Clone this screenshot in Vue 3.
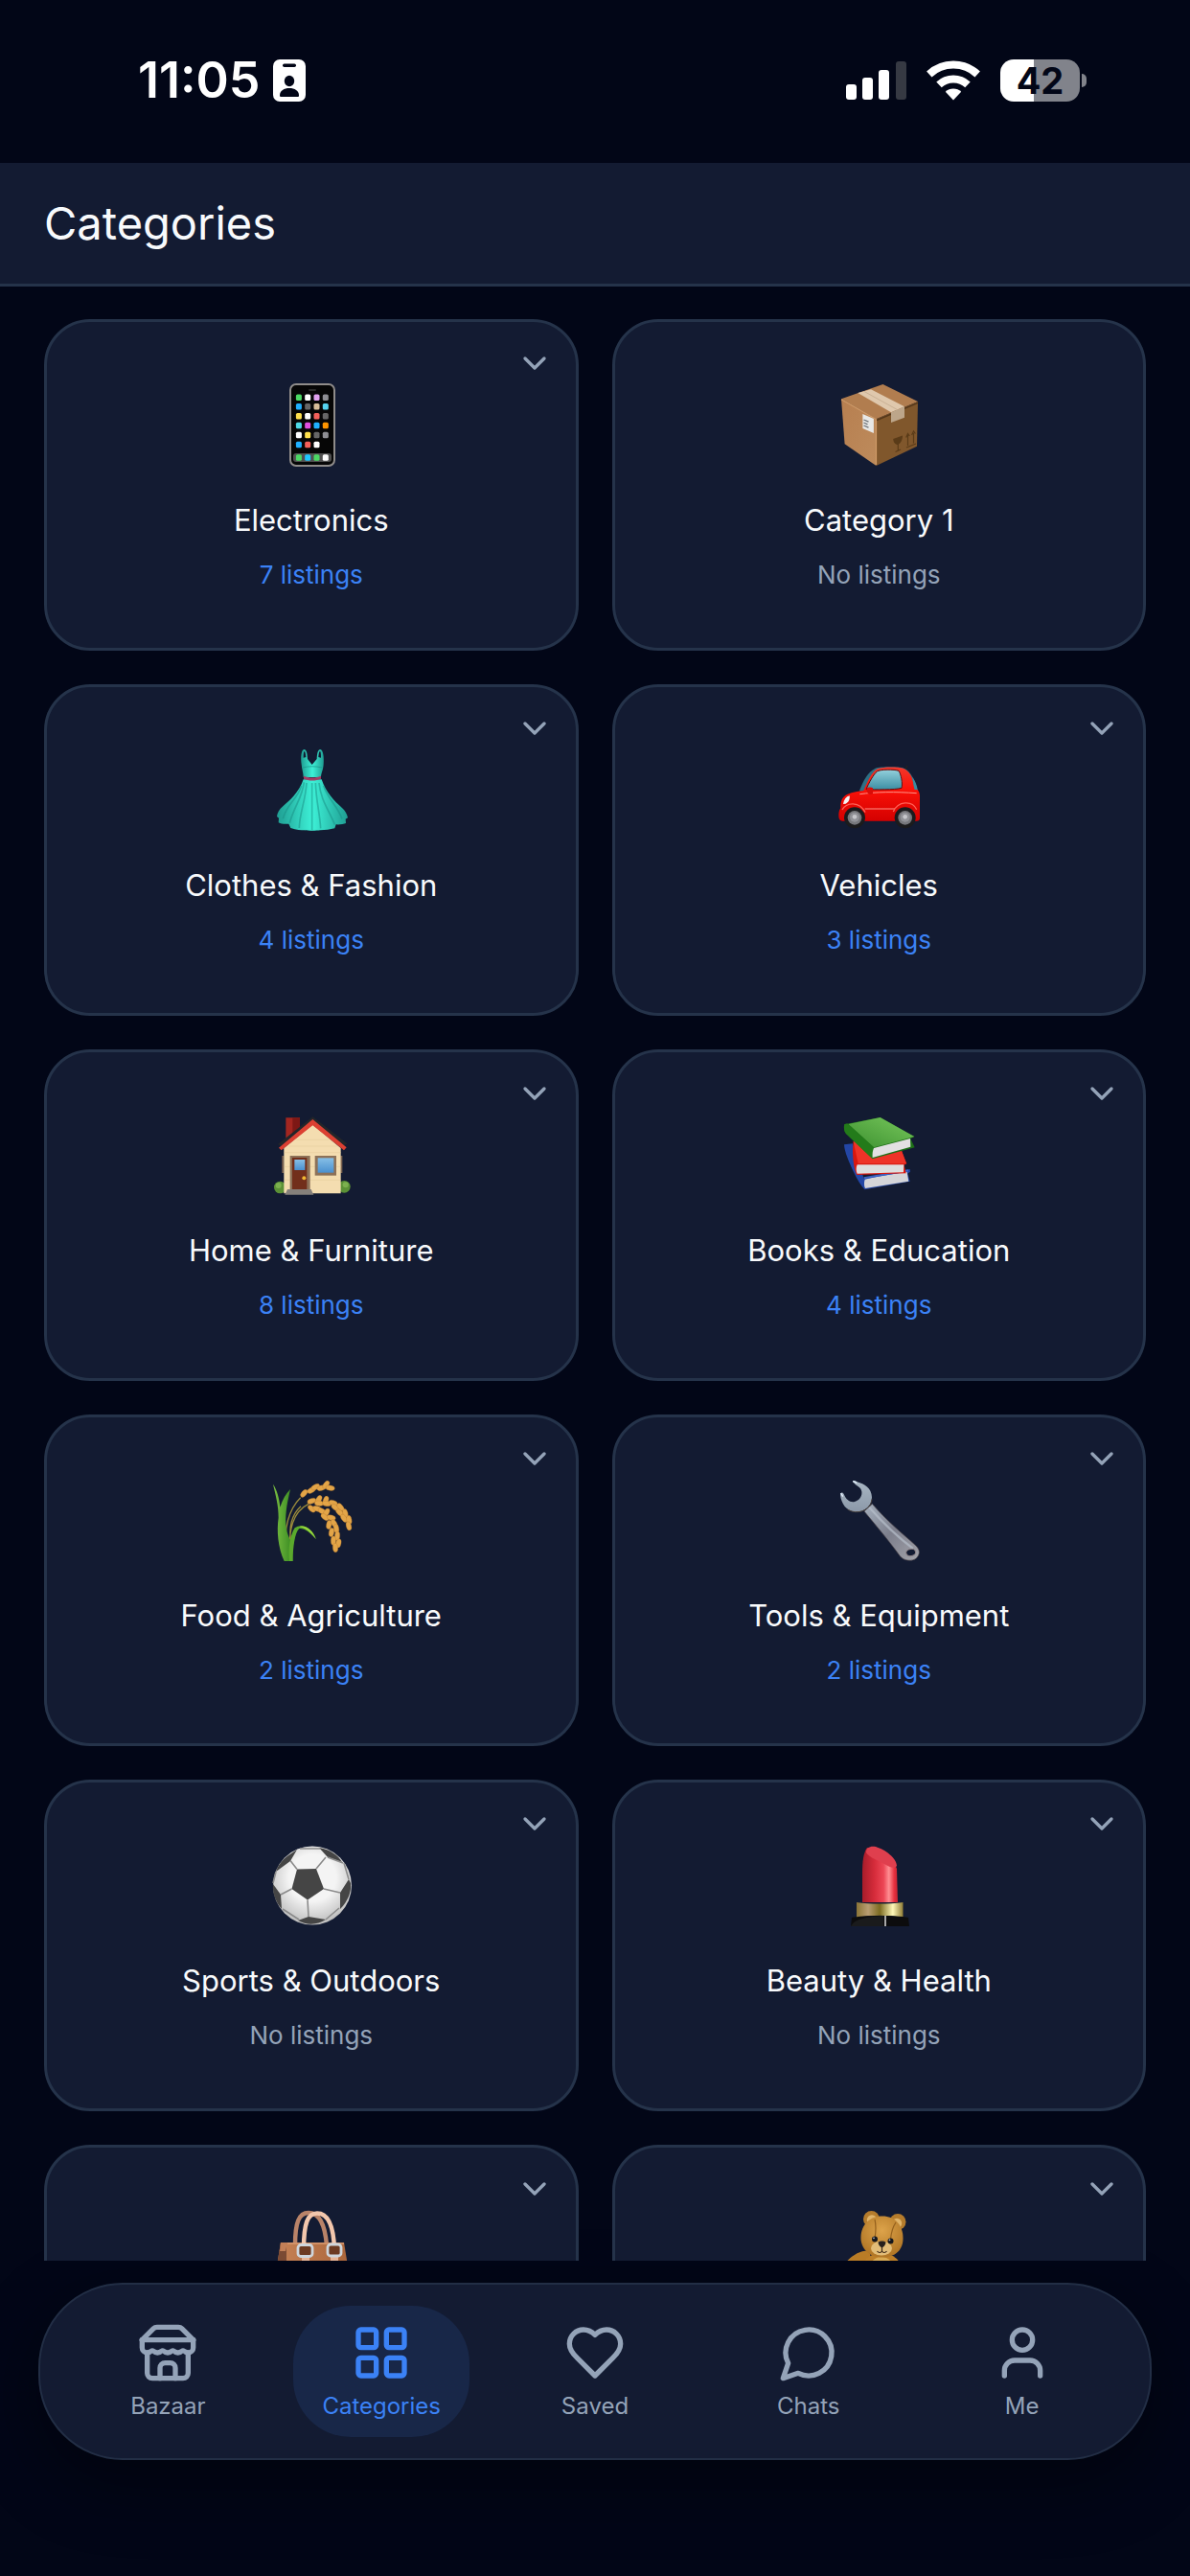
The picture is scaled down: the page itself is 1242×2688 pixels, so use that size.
<template>
  <div class="app">
    <!-- Shared drawings, referenced by id -->
    <svg class="sprite" aria-hidden="true">
      <defs>
        <linearGradient id="g-dress" x1="0" x2="1" y1="0" y2="0">
          <stop offset="0" stop-color="#1f9d92" />
          <stop offset="0.5" stop-color="#3df0d6" />
          <stop offset="1" stop-color="#1f9d92" />
        </linearGradient>
        <linearGradient id="g-glass" x1="0" x2="0" y1="0" y2="1">
          <stop offset="0" stop-color="#93d0dc" />
          <stop offset="1" stop-color="#3c8ea3" />
        </linearGradient>
        <linearGradient id="g-car" x1="0" x2="0" y1="0" y2="1">
          <stop offset="0" stop-color="#f2382c" />
          <stop offset="0.4" stop-color="#fb1208" />
          <stop offset="1" stop-color="#d40000" />
        </linearGradient>
        <linearGradient id="g-window" x1="0" x2="0" y1="0" y2="1">
          <stop offset="0" stop-color="#86bfe6" />
          <stop offset="1" stop-color="#4a90cf" />
        </linearGradient>
        <linearGradient id="g-green" x1="0" x2="1" y1="1" y2="0">
          <stop offset="0" stop-color="#3c9130" />
          <stop offset="1" stop-color="#78c75c" />
        </linearGradient>
        <linearGradient id="g-leaf" x1="0" x2="1" y1="0" y2="0">
          <stop offset="0" stop-color="#7cc142" />
          <stop offset="1" stop-color="#388a22" />
        </linearGradient>
        <linearGradient id="g-steel" x1="0" x2="0" y1="0" y2="1">
          <stop offset="0" stop-color="#a9b7c4" />
          <stop offset="1" stop-color="#8b98a8" />
        </linearGradient>
        <linearGradient id="g-handle" x1="0" x2="1" y1="0" y2="1">
          <stop offset="0" stop-color="#a5b0be" />
          <stop offset="0.5" stop-color="#7d7f8c" />
          <stop offset="1" stop-color="#a3a3aa" />
        </linearGradient>
        <radialGradient id="g-ball" cx="0.5" cy="0.4" r="0.6">
          <stop offset="0.5" stop-color="#f4f4f4" />
          <stop offset="1" stop-color="#bdbdbd" />
        </radialGradient>
        <linearGradient id="g-lip" x1="0" x2="1" y1="0" y2="0">
          <stop offset="0" stop-color="#a81c2a" />
          <stop offset="0.35" stop-color="#d62c3b" />
          <stop offset="0.6" stop-color="#ec4655" />
          <stop offset="0.75" stop-color="#ff8f93" />
          <stop offset="0.9" stop-color="#e8303f" />
          <stop offset="1" stop-color="#c42332" />
        </linearGradient>
        <linearGradient id="g-gold" x1="0" x2="1" y1="0" y2="0">
          <stop offset="0" stop-color="#8a7436" />
          <stop offset="0.25" stop-color="#b99d72" />
          <stop offset="0.5" stop-color="#7c6b20" />
          <stop offset="0.78" stop-color="#fff8b8" />
          <stop offset="1" stop-color="#8f7c35" />
        </linearGradient>
        <radialGradient id="g-bear" cx="0.5" cy="0.35" r="0.7">
          <stop offset="0" stop-color="#dda34a" />
          <stop offset="1" stop-color="#ad7222" />
        </radialGradient>
        <linearGradient id="g-bag" x1="0" x2="1" y1="0" y2="0">
          <stop offset="0" stop-color="#c88457" />
          <stop offset="1" stop-color="#a9643a" />
        </linearGradient>
        <linearGradient id="g-box" x1="0" x2="1" y1="0" y2="1">
          <stop offset="0" stop-color="#b77f50" />
          <stop offset="1" stop-color="#bd8b5c" />
        </linearGradient>
      </defs>

      <symbol id="phone" viewBox="0 0 90 90">
        <rect x="23" y="3" width="46" height="85" rx="6" fill="#060606" stroke="#8f8c8a" stroke-width="2" />
        <rect x="42" y="8" width="8" height="2" rx="1" fill="#2a2a2a" />
        <rect x="26" y="75" width="40" height="9" rx="3" fill="#505050" />
        <rect
          v-for="dot in phoneDots"
          :key="dot.x + '-' + dot.y"
          :x="dot.x"
          :y="dot.y"
          width="6"
          height="6.6"
          rx="1.6"
          :fill="dot.color"
        />
      </symbol>

      <symbol id="box" viewBox="0 0 90 90">
        <path d="M49.5 3 86 21 42.5 39.3 6 18.3Z" fill="#b17d4f" />
        <path d="M6 18.3 42.5 39.3V88L9.6 65.3Z" fill="url(#g-box)" />
        <path d="M86 21 42.5 39.3V88L85 67.7Z" fill="#80572c" />
        <path d="M6 18.8 42.5 39.6V87" fill="none" stroke="#cf9a68" stroke-width="1.2" />
        <path d="M43 40.5 86 22.4" stroke="#54371a" stroke-width="1.4" />
        <path d="M23.3 12 37 8.3 72 26.3 58 32.3Z" fill="#dfc8ad" />
        <path d="M58 32.3 72 26.3V37.7L58 43Z" fill="#bda68a" />
        <path d="m30 10.5 34.5 19" stroke="#c9b195" />
        <path d="M28.4 34 39.9 39V54L28.4 49Z" fill="#e8e8e6" />
        <path d="m29.5 40 5 2.2M29.5 43l4 1.8M29.5 46l5 2.2" stroke="#6f7479" stroke-width="1.3" />
        <path d="M60.2 60 70 56.5C70 61 68 64.5 65.3 66 62 66 60.5 63.5 60.2 60Z" fill="#5a3b18" />
        <path d="M65.3 65v7M62.5 73.5 68 71M75.5 67V56M81.5 64.5V54M73.7 58.5l1.8-4 1.8 2.500M79.600 56l1.900-4 1.900 2.500M74 69l10-4" fill="none" stroke="#5a3b18" stroke-width="1.2" />
      </symbol>

      <symbol id="dress" viewBox="120 86 270 270">
        <path d="M224 142C221 120 223 96 232 95c9 0 10 16 11 30l14 18 15-18c1-14 2-30 11-30 9 1 12 25 10 47-1 18-8 26-8 40l-55 0c0-14-5-26-6-40Z" fill="url(#g-dress)" />
        <path d="M230 121c0-12 1-20 3-20 3 0 4 10 5 18ZM285 121c0-12-1-20-3-20-3 0-4 10-5 18Z" fill="#131b32" />
        <path d="M230 189c-14 41-45 68-64 84-12 10-18 21-19 32l6 5-1 14c8 5 22 5 32 4l6 13c18 7 33 7 44 7 10 2 38 2 48 0 17 0 31-2 46-6l4-12c10 1 25-1 31-4l-1-13 7-4c-3-13-8-22-18-31-25-22-50-47-64-89Z" fill="url(#g-dress)" />
        <path d="M232 198c-6 50-30 72-45 127M240 200c-4 60-22 92-23 141M279 200c6 55 28 80 49 130M268 200c2 60 13 90 16 142M224 208c-14 46-47 58-58 104M293 208c14 42 42 62 58 104M257 200v147" fill="none" stroke="#178e83" stroke-width="5" opacity="0.5" />
        <path d="M228 152c18-5 40-5 60 0" fill="none" stroke="#1a9489" stroke-width="3" opacity="0.7" />
        <path d="M231 178c15 7 39 7 54 0v9c-16 7-39 7-54 0Z" fill="#a43c64" />
      </symbol>

      <symbol id="car" viewBox="126 86 270 270">
        <path d="m344 158 7-13" stroke="#222" stroke-width="4" />
        <path d="M201 224c12-32 26-58 50-70 15-5 72-6 89 0 22 10 36 38 43 70l-10 12H212Z" fill="#2e6f84" />
        <path d="M214 224c12-26 24-58 44-68 20-7 60-7 82-1 18 8 27 28 31 50 3 12 18 14 19 34v71c0 6-4 9-10 9H148c-8 0-12-6-12-16 0-10 1-17 6-24-1-20 4-36 22-44 16-6 35-9 50-11Z" fill="url(#g-car)" />
        <path d="M222 220c8-20 24-48 34-56 9-7 55-7 68-2 7 10 13 40 9 54-20 6-85 5-111 4Z" fill="url(#g-glass)" stroke="#5b0f10" stroke-width="3" />
        <path d="M366 182c8 8 15 24 17 40l-10-2Z" fill="#3b8a9f" />
        <path d="M202 235c50-7 110-8 178-3M218 281h94" fill="none" stroke="#ff9489" stroke-width="3" />
        <path d="M150 266c2-14 9-23 20-26 2 12-4 21-12 25Z" fill="#f5f5f5" />
        <path d="M224 215c8-3 15-2 19 1v18c-10 4-15 0-18-5Z" fill="#d90d08" />
        <path d="M147 284c13-24 54-28 72 8M307 290c15-34 59-36 73-7" fill="none" stroke="#ff6257" stroke-width="4" />
        <g v-for="cx in [186, 344]" :key="cx">
          <circle :cx="cx" cy="309" r="33" fill="#1b1b1d" />
          <circle :cx="cx" cy="309" r="22" fill="#77787c" />
          <circle :cx="cx" cy="307" r="15" fill="#929398" />
          <circle :cx="cx" cy="306" r="7" fill="#c6c7cb" />
        </g>
      </symbol>

      <symbol id="house" viewBox="120 58 270 270">
        <circle cx="157" cy="295" r="19" fill="#5b9136" />
        <circle cx="358" cy="293" r="19" fill="#5b9136" />
        <circle cx="152" cy="289" r="9" fill="#7bb04e" />
        <circle cx="362" cy="287" r="9" fill="#7bb04e" />
        <path d="M175 77h44v45l-44 22Z" fill="#a32620" />
        <path d="M196 77h23v45l-23 12Z" fill="#7d1815" />
        <path d="M163 196h6v54h-6ZM346 196h6v54h-6Z" fill="#7c6350" />
        <path d="M169 172 259 98l88 74v142H169Z" fill="#f4ddb0" />
        <path d="M185 166h150M170 186h177M170 230h177M170 272h177M208 146h102" stroke="#e2c898" stroke-width="1.5" />
        <path d="M150 160 259 74l108 84-9 6-99-72-98 74Z" fill="#23262a" />
        <path d="m153 171 106-89 106 88-8 9-98-78-98 78Z" fill="#dc4032" />
        <path d="M188 196h63v105h-63Z" fill="#8c7158" />
        <path d="M195 202h46v99h-46Z" fill="#722f1b" />
        <path d="M202 208h33v33h-33Z" fill="url(#g-window)" />
        <circle cx="232" cy="266" r="6" fill="#f0b732" />
        <path d="M266 196h67v62h-67Z" fill="#8c7158" />
        <path d="M275 203h50v46h-50Z" fill="url(#g-window)" />
        <path d="M180 301h74l8 17h-90Z" fill="#85807b" />
      </symbol>

      <symbol id="books" viewBox="126 58 270 270">
        <path d="m153 161 27-3 35 110 144-30 1 8-8 6 7 24-142 26c-12-14-25-35-34-55-13-27-30-66-30-86Z" fill="#2346a5" />
        <path d="M218 270c30-8 84-16 132-24l5 30-136 22c-4-8-4-20-1-28Z" fill="#d5d5d8" />
        <path d="m215 266 139-24" stroke="#3c63c4" stroke-width="6" />
        <path d="m182 150 150 28 17 43-8 4 6 26-154 5c-8-14-13-48-13-78Z" fill="#d9170f" />
        <path d="m182 152 15 68 151 1-16-43Z" fill="#ee3328" />
        <path d="M194 224h146l-1 24-145 4c-4-8-4-20 0-28Z" fill="#dedede" />
        <path d="m154 98 112-22 107 60-12 7 13 27-132 36-83-79c-6-7-8-19-5-30Z" fill="#1d7016" />
        <path d="M166 97 266 76l107 60-127 34Z" fill="url(#g-green)" />
        <path d="M154 98c3-3 8-3 12-1l80 73-4 36-83-79c-6-7-8-19-5-29Z" fill="#237b1a" />
        <path d="m246 172 114-30 1 26-119 34c-1-10 0-22 4-30Z" fill="#e2e0e2" />
      </symbol>

      <symbol id="rice" viewBox="120 60 270 270">
        <path d="M176 300c-10-80 10-140 45-175M186 290c0-60 8-120 60-145M192 270c-10-54 0-90 30-118" fill="none" stroke="#9b8b3b" stroke-width="4" />
        <path d="M170 324c-20-44-24-96-18-136 0-40-9-70-17-105 12 18 20 44 22 72 8-24 18-42 32-56-8 36-16 70-14 110 3 30 12 46 21 60v55Z" fill="url(#g-leaf)" />
        <path d="M186 324c-4-40 2-82 17-104 22-16 54-2 67 36-18-22-38-36-53-34-14 12-20 60-20 102Z" fill="#5aa92c" />
        <path d="M217 216c22-6 42 12 52 38-16-20-34-34-52-38Z" fill="#96d63c" />
        <g fill="#e3a548" stroke="#b87828" stroke-width="1">
          <ellipse
            v-for="grain in riceGrains"
            :key="grain.join('-')"
            :cx="grain[0]"
            :cy="grain[1]"
            rx="14"
            ry="8"
            :transform="`rotate(${grain[2]} ${grain[0]} ${grain[1]})`"
          />
        </g>
      </symbol>

      <symbol id="wrench" viewBox="126 60 270 270">
        <path d="M216 168c38 46 74 88 112 140 12 16 40 18 52 6 13-14 9-28-3-39-42-38-92-78-136-130Z" fill="url(#g-handle)" stroke="#4b4448" stroke-width="2" />
        <path d="M232 156c46 52 88 92 136 128" fill="none" stroke="#b6bfcb" stroke-width="7" opacity="0.7" />
        <ellipse cx="362" cy="297" rx="15" ry="11" transform="rotate(-10 362 297)" fill="#131b32" stroke="#8d8286" stroke-width="3" />
        <path d="M180 73c5-2 9 0 13 3 24 6 46 20 47 48 0 28-24 48-52 46-28-3-44-26-47-54 2-8 7-8 11-2 7 18 20 27 34 24 16-4 24-18 22-32-2-14-16-16-28-30Z" fill="url(#g-steel)" />
        <path d="M240 130c-2 24-24 42-52 40-10-1-18-4-24-8" fill="none" stroke="#4a4340" stroke-width="3" />
        <path d="m181 74 12 5M143 111l6 11" stroke="#e6f2ff" stroke-width="4" />
      </symbol>

      <symbol id="ball" viewBox="0 0 90 90">
        <circle cx="46" cy="45.5" r="41" fill="url(#g-ball)" />
        <g fill="#454545">
          <path d="M30 28.5 50 28l8 21-17 11.5L24.500 49Z" />
          <path d="M53 6c12 2 20 8 24 15l-15-5Z" />
          <path d="M24 12c-8 5-14 12-16 19l15-11 7-12Z" />
          <path d="M84 39 75 53v17c8-8 12-18 11-27Z" />
          <path d="M5 44c-1 10 3 19 9 26l-1-15Z" />
          <path d="m31 82 11-4 18 3c-9 6-20 6-29 1Z" />
        </g>
        <path d="m30 28.5-7-9M50 28l10-12M58 49l17 4M41 60.500 42 78M24.500 49 13 55M15 70l17 11M74 69 60 81M62 16l16 6M33 7l21 0M5 43l3-12M84 39l-5-17" fill="none" stroke="#8b8b8b" stroke-width="1.6" />
      </symbol>

      <symbol id="lipstick" viewBox="0 0 90 90">
        <path d="M28 63V34c0-14 1-22 5-28C48 8 60 16 64 28l1 35Z" fill="url(#g-lip)" />
        <path d="M32 11c0-5 4-7 10-6 10 3 22 12 22 20-2 3-7 2-13-2-10-5-17-8-19-12Z" fill="#df3f4e" />
        <path d="M22 63c14 2 34 2 48.5 0v16c-14-3-34-3-48.5 0Z" fill="url(#g-gold)" />
        <path d="M17 79c10-2 44-3 59 0l1 9H16Z" fill="#0c0c0d" />
        <path d="M16 88c4-8 18-10 34-11v11Z" fill="#1a1b1c" />
        <path d="M52 77v11" stroke="#a9a9a9" stroke-width="2" />
      </symbol>

      <symbol id="bag" viewBox="0 0 90 90">
        <path d="M28 40C28 16 32 6 42 6s17 10 19 34" fill="none" stroke="#b98368" stroke-width="4.5" />
        <path d="M13 37h66l8 49H5Z" fill="url(#g-bag)" />
        <path d="M13 37h6v49H5Z" fill="#7b4a33" />
        <path d="M13 37h7l-2 9h-6Z" fill="#c27f57" />
        <path d="M20 38h59" stroke="#d99a70" stroke-width="1.5" />
        <path d="M37 44C37 17 41 6.500 51 6.500S68 17 69 44" fill="none" stroke="#f3c7ac" stroke-width="4.5" />
        <path d="M35 50h8v22h-8ZM65 50h8v22h-8Z" fill="#e9b596" />
        <rect x="31" y="39.5" width="15" height="12" rx="3" fill="#6d3b22" stroke="#cfd6dc" stroke-width="2.8" />
        <rect x="62" y="39" width="14" height="12" rx="3" fill="#6d3b22" stroke="#cfd6dc" stroke-width="2.8" />
      </symbol>

      <symbol id="bear" viewBox="0 0 90 90">
        <ellipse cx="22" cy="58" rx="17" ry="8" transform="rotate(-38 22 58)" fill="#b97c26" />
        <ellipse cx="48" cy="68" rx="22" ry="20" fill="#bd7f28" />
        <ellipse cx="48" cy="68" rx="14" ry="16" fill="#d9aa52" />
        <circle cx="37.5" cy="12.5" r="8.5" fill="#b57c2c" />
        <circle cx="38" cy="13.5" r="5.2" fill="#e0b46a" />
        <circle cx="65" cy="15.5" r="8.5" fill="#b57c2c" />
        <circle cx="64" cy="17" r="5.2" fill="#e0b46a" />
        <path d="M49 9.500c13 0 21 9 21.500 22C71 45 62 52.500 49 52.500S26 44 26.500 31C27 18 36 9.500 49 9.500Z" fill="url(#g-bear)" />
        <path d="M41 13c2 8 1 14 0 20M63 16c-4 6-5 12-5.500 18" fill="none" stroke="#94601d" stroke-width="1.2" />
        <ellipse cx="48" cy="43" rx="11" ry="7.5" fill="#e2bd78" />
        <circle cx="41" cy="33.5" r="3" fill="#15171c" />
        <circle cx="57.5" cy="35.5" r="3" fill="#15171c" />
        <circle cx="40" cy="32.3" r="0.9" fill="#aab4c4" />
        <circle cx="56.5" cy="34.3" r="0.9" fill="#aab4c4" />
        <path d="M44.500 36.500c2-1.500 6-1.500 8 0 0 3-2 5-4 6-2-1-4-3-4-6Z" fill="#26201c" />
        <path d="M48.500 42v4M43.500 46c1.500 2 4 2 5 0 1 2 3.500 2 5 0" fill="none" stroke="#3a2817" stroke-width="1.2" />
      </symbol>

      <symbol id="nav-store" viewBox="0 0 24 24">
        <path d="m2 7 4.41-4.41A2 2 0 0 1 7.83 2h8.34a2 2 0 0 1 1.42.59L22 7" />
        <path d="M4 12v8a2 2 0 0 0 2 2h12a2 2 0 0 0 2-2v-8" />
        <path d="M15 22v-4a2 2 0 0 0-2-2h-2a2 2 0 0 0-2 2v4" />
        <path d="M2 7h20" />
        <path d="M22 7v3a2 2 0 0 1-2 2a2.7 2.7 0 0 1-1.59-.63.7.7 0 0 0-.82 0A2.7 2.7 0 0 1 16 12a2.7 2.7 0 0 1-1.59-.63.7.7 0 0 0-.82 0A2.7 2.7 0 0 1 12 12a2.7 2.7 0 0 1-1.59-.63.7.7 0 0 0-.82 0A2.7 2.7 0 0 1 8 12a2.7 2.7 0 0 1-1.59-.63.7.7 0 0 0-.82 0A2.7 2.7 0 0 1 4 12a2 2 0 0 1-2-2V7" />
      </symbol>
      <symbol id="nav-grid" viewBox="0 0 24 24">
        <rect x="3" y="3" width="7" height="7" rx="1" />
        <rect x="14" y="3" width="7" height="7" rx="1" />
        <rect x="14" y="14" width="7" height="7" rx="1" />
        <rect x="3" y="14" width="7" height="7" rx="1" />
      </symbol>
      <symbol id="nav-heart" viewBox="0 0 24 24">
        <path d="M19 14c1.49-1.46 3-3.21 3-5.5A5.5 5.5 0 0 0 16.5 3c-1.76 0-3 .5-4.5 2-1.5-1.5-2.74-2-4.5-2A5.5 5.5 0 0 0 2 8.5c0 2.3 1.5 4.05 3 5.5l7 7Z" />
      </symbol>
      <symbol id="nav-chat" viewBox="0 0 24 24">
        <path d="M7.9 20A9 9 0 1 0 4 16.1L2 22Z" />
      </symbol>
      <symbol id="nav-user" viewBox="0 0 24 24">
        <path d="M19 21v-2a4 4 0 0 0-4-4H9a4 4 0 0 0-4 4v2" />
        <circle cx="12" cy="7" r="4" />
      </symbol>
    </svg>

    <div class="status-bar">
      <div class="status-left">
        <span class="time">11:05</span>
        <svg class="badge-icon" viewBox="0 0 34 44" aria-hidden="true">
          <rect width="34" height="44" rx="7" fill="#fff" />
          <rect x="10" y="4.5" width="14" height="3.5" rx="1.7" fill="#020617" />
          <ellipse cx="17" cy="22.5" rx="5.2" ry="5.8" fill="#020617" />
          <path d="M7 37.500c0-5 4.500-7.500 10-7.500s10 2.500 10 7.500c0 1-.5 1.500-1.500 1.500h-17C7.500 39 7 38.500 7 37.500Z" fill="#020617" />
        </svg>
      </div>
      <div class="status-right">
        <svg class="signal-icon" viewBox="0 0 63 40" aria-hidden="true">
          <rect x="0" y="24" width="11" height="16" rx="3" fill="#fff" />
          <rect x="17" y="17" width="11" height="23" rx="3" fill="#fff" />
          <rect x="34" y="9" width="11" height="31" rx="3" fill="#fff" />
          <rect x="52" y="0" width="11" height="40" rx="3" fill="#363943" />
        </svg>
        <svg class="wifi-icon" viewBox="0 0 56 42" aria-hidden="true">
          <path d="M2.8 14.5a37 37 0 0 1 50.4 0M13 25.4a22 22 0 0 1 30 0" fill="none" stroke="#fff" stroke-width="8" />
          <path d="M28 41.5 19.8 32.7a12 12 0 0 1 16.4 0Z" fill="#fff" />
        </svg>
        <div class="battery">
          <span class="battery-body">42</span>
          <span class="battery-tip"></span>
        </div>
      </div>
    </div>

    <header class="page-header">
      <h1>Categories</h1>
    </header>

    <main class="content">
      <div class="grid">
        <button v-for="category in categories" :key="category.icon" type="button" class="card">
          <svg v-if="category.expandable" class="chevron" viewBox="0 0 24 24" aria-hidden="true">
            <path d="m6 9 6 6 6-6" />
          </svg>
          <svg class="emoji" aria-hidden="true"><use :href="'#' + category.icon" /></svg>
          <template v-if="category.name">
            <span class="name">{{ category.name }}</span>
            <span class="count" :class="{ empty: !category.count }">{{ listingLabel(category.count) }}</span>
          </template>
        </button>
      </div>
    </main>

    <nav class="tab-bar">
      <a
        v-for="tab in tabs"
        :key="tab.label"
        href="#"
        class="tab"
        :class="{ active: tab.label === activeTab }"
        @click.prevent="activeTab = tab.label"
      >
        <svg class="tab-icon" aria-hidden="true"><use :href="'#' + tab.icon" /></svg>
        <span>{{ tab.label }}</span>
      </a>
    </nav>
  </div>
</template>

<script setup>
import { ref } from 'vue'

const categories = [
  { name: 'Electronics', icon: 'phone', count: 7, expandable: true },
  { name: 'Category 1', icon: 'box', count: 0, expandable: false },
  { name: 'Clothes & Fashion', icon: 'dress', count: 4, expandable: true },
  { name: 'Vehicles', icon: 'car', count: 3, expandable: true },
  { name: 'Home & Furniture', icon: 'house', count: 8, expandable: true },
  { name: 'Books & Education', icon: 'books', count: 4, expandable: true },
  { name: 'Food & Agriculture', icon: 'rice', count: 2, expandable: true },
  { name: 'Tools & Equipment', icon: 'wrench', count: 2, expandable: true },
  { name: 'Sports & Outdoors', icon: 'ball', count: 0, expandable: true },
  { name: 'Beauty & Health', icon: 'lipstick', count: 0, expandable: true },
  { name: '', icon: 'bag', count: 0, expandable: true },
  { name: '', icon: 'bear', count: 0, expandable: true }
]

const tabs = [
  { label: 'Bazaar', icon: 'nav-store' },
  { label: 'Categories', icon: 'nav-grid' },
  { label: 'Saved', icon: 'nav-heart' },
  { label: 'Chats', icon: 'nav-chat' },
  { label: 'Me', icon: 'nav-user' }
]
const activeTab = ref('Categories')

function listingLabel(count) {
  return count ? `${count} listings` : 'No listings'
}

// App squares on the phone screen, row by row; the last row is the dock
const phoneRows = [
  [13.4, ['#4cd964', '#ffffff', '#e0a0ee', '#8e8e93']],
  [23, ['#1fb0ff', '#666666', '#d8bd98', '#55d3ee']],
  [33, ['#ffe14d', '#ffffff', '#f4605a', '#666666']],
  [42.7, ['#4fdbe6', '#df4fe0', '#1fb0ff', '#ff9500']],
  [52.7, ['#ffffff', '#ffe14d', '#666666', '#8e8e93']],
  [62.7, ['#1fb0ff', '#f4605a', '#ffffff']],
  [76.2, ['#4cd964', '#1fc8ff', '#4cd964', '#ffffff']]
]
const phoneDots = phoneRows.flatMap(([y, colors]) =>
  colors.map((color, i) => ({ x: 28.9 + i * 9.3, y, color }))
)

// [x, y, angle] of each grain along the three ears
const riceGrains = [
  [232, 112, -50], [255, 102, -30], [268, 92, -25], [286, 95, -15], [301, 85, -55], [314, 95, 8],
  [256, 136, -20], [278, 131, -60], [279, 143, 5], [300, 134, -70], [303, 144, 10], [323, 142, 20],
  [330, 156, 35], [346, 155, 50], [344, 172, 40], [361, 174, 75], [357, 190, 55], [373, 195, 80], [372, 214, 75],
  [256, 160, 40], [273, 160, 20], [289, 168, 30], [302, 172, -60], [297, 186, 40], [317, 188, 15],
  [310, 210, 100], [326, 206, 60], [333, 222, 80], [318, 234, 100], [336, 245, 95], [324, 260, 90],
  [340, 268, 100], [330, 282, 85]
]
</script>

<style>
body {
  background: #020617;
}
</style>

<style scoped>
.app {
  display: flex;
  flex-direction: column;
  height: 100vh;
  overflow: hidden;
  background: #020617;
  color: #f8fafc;
  font-family: Inter, Roboto, sans-serif;
}

.sprite {
  position: absolute;
  width: 0;
  height: 0;
}

/* Status bar */
.status-bar {
  display: flex;
  flex: none;
  justify-content: space-between;
  box-sizing: border-box;
  height: 170px;
  padding: 60px 108px 62px 144px;
}

.status-left,
.status-right {
  display: flex;
  align-items: center;
  height: 48px;
}

.status-left {
  gap: 13px;
}

.status-right {
  gap: 21px;
}

.time {
  font-size: 52px;
  font-weight: 600;
  line-height: 48px;
  color: #fff;
}

.badge-icon {
  width: 34px;
  height: 44px;
}

.signal-icon {
  width: 63px;
  height: 40px;
}

.wifi-icon {
  width: 56px;
  height: 42px;
}

.battery {
  display: flex;
  align-items: center;
  gap: 2px;
}

.battery-body {
  width: 83px;
  border-radius: 14px;
  background: linear-gradient(to right, #fff 42%, #81838b 42%);
  color: #020617;
  font-size: 38px;
  font-weight: 700;
  line-height: 44px;
  text-align: center;
}

.battery-tip {
  width: 5px;
  height: 14px;
  border-radius: 0 6px 6px 0;
  background: #81838b;
}

/* Header */
.page-header {
  flex: none;
  padding: 31px 46px;
  border-bottom: 3px solid #25334a;
  background: #131b32;
}

h1 {
  margin: 0;
  font-size: 47px;
  font-weight: 400;
  line-height: 64px;
}

/* Category grid */
.content {
  flex: 1;
  min-height: 0;
  padding: 34px 46px 0;
  overflow-y: auto;
  scrollbar-width: none;
}

.grid {
  display: grid;
  grid-template-columns: 1fr 1fr;
  grid-auto-rows: 1fr;
  gap: 35px;
}

.card {
  position: relative;
  display: flex;
  flex-direction: column;
  align-items: center;
  padding: 62px 24px 60px;
  border: 3px solid #25334a;
  border-radius: 48px;
  background: #131b32;
  color: inherit;
  font-family: inherit;
  cursor: pointer;
}

.chevron {
  position: absolute;
  top: 23px;
  right: 23px;
  width: 40px;
  height: 40px;
  fill: none;
  stroke: #94a3b8;
  stroke-width: 2;
  stroke-linecap: round;
  stroke-linejoin: round;
}

.emoji {
  width: 90px;
  height: 90px;
  margin-bottom: 36px;
}

.name {
  margin-bottom: 22px;
  font-size: 31px;
  line-height: 38px;
}

.count {
  color: #3b82f6;
  font-size: 26px;
  line-height: 32px;
}

.count.empty {
  color: #94a3b8;
}

/* Bottom tabs */
.tab-bar {
  display: flex;
  flex: none;
  justify-content: space-around;
  margin: 23px 40px 121px;
  padding: 22px;
  border: 2px solid #222e45;
  border-radius: 88px;
  background: #131b32;
  box-shadow: 0 24px 72px rgba(0, 0, 0, 0.4);
}

.tab {
  display: flex;
  flex-direction: column;
  align-items: center;
  gap: 8px;
  box-sizing: border-box;
  width: 184px;
  padding: 17px 0 16px;
  border-radius: 60px;
  color: #94a3b8;
  font-size: 24px;
  line-height: 32px;
  text-decoration: none;
}

.tab.active {
  background: #182748;
  color: #3b82f6;
}

.tab-icon {
  width: 64px;
  height: 64px;
  fill: none;
  stroke: currentColor;
  stroke-width: 2;
  stroke-linecap: round;
  stroke-linejoin: round;
}
</style>
